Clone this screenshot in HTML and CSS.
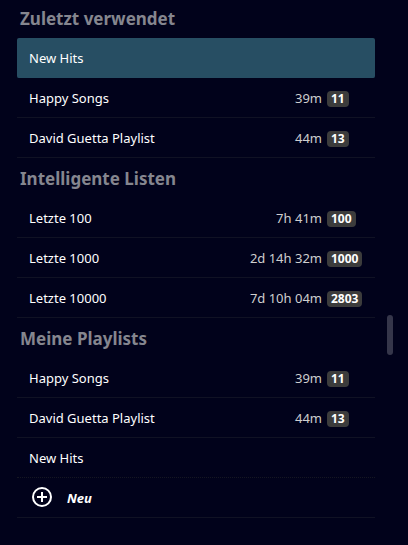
FILE: index.html
```html
<!DOCTYPE html>
<html lang="de">
<head>
<meta charset="utf-8">
<meta name="viewport" content="width=device-width, initial-scale=1">
<title>Playlists</title>
<link rel="stylesheet" href="styles.css">
</head>
<body>
<main class="panel">
  <div class="lists">
    <section>
      <h2 class="heading">Zuletzt verwendet</h2>
      <ul class="list">
        <li class="row selected"><span class="name">New Hits</span></li>
        <li class="row"><span class="name">Happy Songs</span><span class="time">39m</span><span class="count">11</span></li>
        <li class="row"><span class="name">David Guetta Playlist</span><span class="time">44m</span><span class="count">13</span></li>
      </ul>
    </section>
    <section>
      <h2 class="heading">Intelligente Listen</h2>
      <ul class="list">
        <li class="row"><span class="name">Letzte 100</span><span class="time">7h 41m</span><span class="count">100</span></li>
        <li class="row"><span class="name">Letzte 1000</span><span class="time">2d 14h 32m</span><span class="count">1000</span></li>
        <li class="row"><span class="name">Letzte 10000</span><span class="time">7d 10h 04m</span><span class="count">2803</span></li>
      </ul>
    </section>
    <section>
      <h2 class="heading">Meine Playlists</h2>
      <ul class="list framed">
        <li class="row"><span class="name">Happy Songs</span><span class="time">39m</span><span class="count">11</span></li>
        <li class="row"><span class="name">David Guetta Playlist</span><span class="time">44m</span><span class="count">13</span></li>
        <li class="row"><span class="name">New Hits</span></li>
      </ul>
    </section>
    <button class="new" type="button">
      <svg class="plus" viewBox="0 0 20 20" aria-hidden="true"><circle cx="10" cy="10" r="9"/><path d="M10 5v10M5 10h10"/></svg>
      Neu
    </button>
  </div>
  <div class="thumb"></div>
</main>
</body>
</html>
```
FILE: styles.css
```css
* {
  box-sizing: border-box;
}

body {
  margin: 0;
  background: #01021b;
  color: #fff;
  font: 13px/20px "Noto Sans", "Open Sans", sans-serif;
}

.panel {
  position: relative;
  min-height: 100vh;
  padding: 0 33px 0 17px;
  overflow: hidden;
}

/* The list is scrolled slightly past its first heading. */
.lists {
  margin-top: -2px;
}

.heading {
  display: flex;
  align-items: center;
  height: 40px;
  margin: 0;
  padding: 2px 3px 0;
  color: #85868f;
  font-size: 17px;
  font-weight: 700;
  line-height: 24px;
}

.list {
  margin: 0;
  padding: 0;
  list-style: none;
}

.row {
  display: grid;
  grid-template-columns: 1fr auto 48px;
  column-gap: 5px;
  align-items: center;
  height: 40px;
  padding-left: 12px;
  border-bottom: 1px solid #101224;
}

.selected {
  border-color: #274e63;
  border-radius: 2px;
  background: #274e63;
}

.framed .row:last-child {
  border-bottom: 1px dotted #151722;
}

.time {
  color: #cfcfcf;
}

.count {
  justify-self: start;
  height: 16px;
  margin-top: 2px;
  padding: 0 4px;
  border-radius: 4px;
  background: #3c3c3c;
  color: #fff;
  font-size: 12px;
  font-weight: 700;
  line-height: 16px;
}

.new {
  display: flex;
  align-items: center;
  gap: 15px;
  width: 100%;
  height: 40px;
  padding: 0 15px;
  border: 0;
  border-bottom: 1px solid #101224;
  background: none;
  color: #fff;
  font: italic 700 13px/20px "Noto Sans", "Open Sans", sans-serif;
  cursor: pointer;
}

.plus {
  width: 20px;
  height: 20px;
  margin-bottom: 2px;
  fill: none;
  stroke: #fff;
  stroke-width: 2;
}

.thumb {
  position: absolute;
  top: 315px;
  right: 15px;
  width: 6px;
  height: 40px;
  border-radius: 3px;
  background: #35364a;
}
```
